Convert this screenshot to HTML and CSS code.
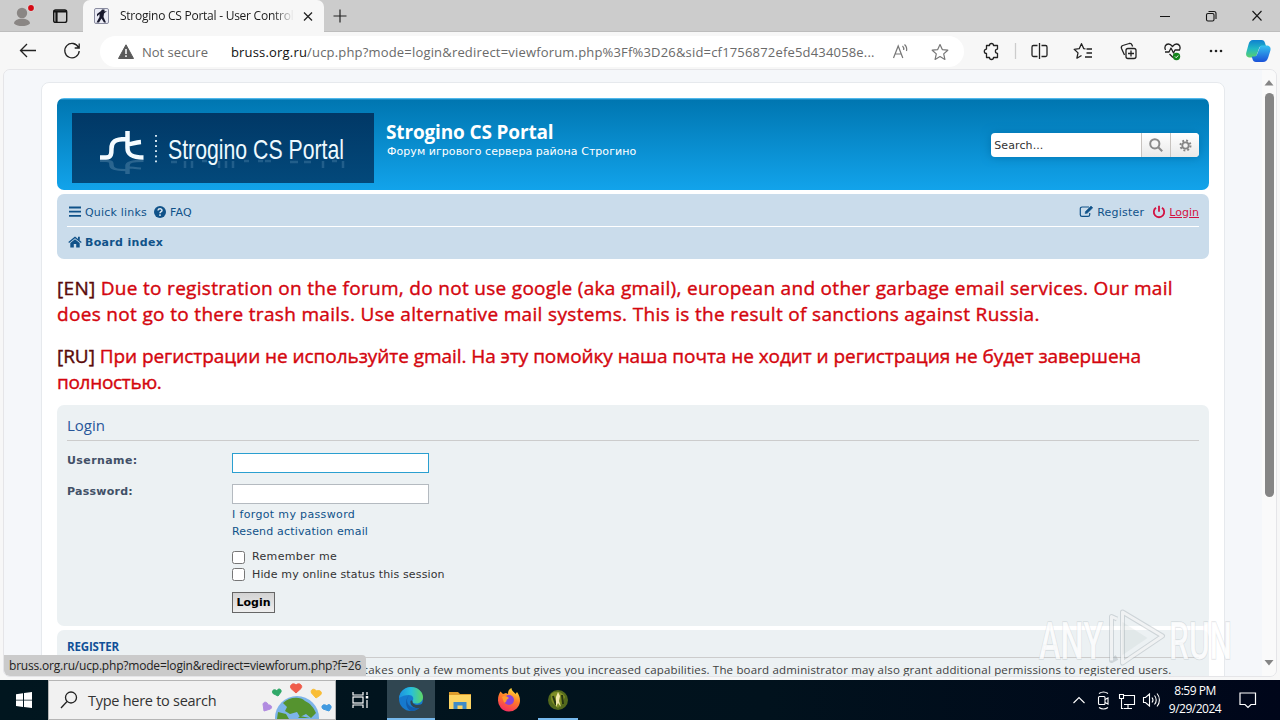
FILE: index.html
```html
<!DOCTYPE html>
<html lang="en">
<head>
<meta charset="utf-8">
<title>Strogino CS Portal - User Control Panel - Login</title>
<link rel="stylesheet" href="styles.css">
</head>
<body>
<div class="screen">
  <header class="tabstrip">
    <svg class="tabstrip-left" width="83" height="32" viewBox="0 0 83 32">
      <circle cx="22" cy="13" r="5.2" fill="#8a8684"/><path d="M14 23.500c0-3 3.500-4.800 8-4.800s8 1.800 8 4.800c-2 2-5 2.600-8 2.600s-6-.6-8-2.600z" fill="#8a8684"/>
      <circle cx="31" cy="8" r="3.600" fill="#e3dcdc"/><circle cx="31" cy="8" r="2.900" fill="#d40a14"/>
      <rect x="53.700" y="10" width="13" height="12.400" rx="2" fill="none" stroke="#151515" stroke-width="1.400"/><path d="M53.500 11.500h13.400M56.500 11v11" stroke="#151515" stroke-width="2.200"/>
    </svg>
    <div class="tab">
      <svg width="16" height="16" viewBox="0 0 16 16"><rect x=".5" y=".5" width="14" height="15" rx="1.500" fill="#e9eaf4" stroke="#8a8ca0"/><path d="M8 1.500h2.500v2L13 3l-3 2.500-.5 3.500 2.500 5.500h-2l-2.500-4-2.500 4H2.500L5.500 9V6L3 8.500V6l4-3z" fill="#17182c"/></svg>
      <span class="tab-title">Strogino CS Portal - User Control</span>
      <svg width="12" height="12" viewBox="0 0 12 12"><path d="M2 2.500l8 8M10 2.500l-8 8" stroke="#222" stroke-width="1.300"/></svg>
    </div>
    <svg class="newtab" width="16" height="16" viewBox="0 0 16 16"><path d="M8 1.500v13M1.500 8h13" stroke="#222" stroke-width="1.200"/></svg>
    <svg class="winctl" width="130" height="32" viewBox="0 0 130 32" fill="none" stroke="#151515" stroke-width="1.100"><path d="M10 16.500h10M102.500 11l9 9.500M111.500 11l-9 9.500"/><rect x="56.500" y="13.500" width="7.500" height="7.500" rx="1.500"/><path d="M58.500 11.500h5.500a2 2 0 0 1 2 2v5.500"/></svg>
  </header>

  <nav class="toolbar">
    <svg class="nav-icons" width="100" height="38" viewBox="0 0 100 38" fill="none" stroke="#222" stroke-width="1.300"><path d="M36 18.500H20.500M27 12l-6.500 6.500L27 25M78.500 15.500A7.200 7.200 0 1 0 79.200 19M79.200 11.500v4.500h-4.500"/></svg>
    <div class="address">
      <svg width="16" height="15" viewBox="0 0 16 15"><path d="M8 .8L15.500 14.500H.5z" fill="#5a5a5a" stroke="#5a5a5a" stroke-linejoin="round"/><path d="M8 5v5M8 11.300v1.700" stroke="#fff" stroke-width="1.500"/></svg>
      <span class="notsecure">Not secure</span><span class="sep"></span>
      <span class="url"><b>bruss.org.ru</b>/ucp.php?mode=login&amp;redirect=viewforum.php%3Ff%3D26&amp;sid=cf1756872efe5d434058e...</span>
      <svg class="address-icons" width="60" height="20" viewBox="0 0 60 20" fill="none" stroke="#777" stroke-width="1.200"><path d="M1.500 16L6.200 4l4.600 12M3 12h6.400M10.500 4c1 1 1.500 2.500 1.200 4M12.500 2.500c2 2 2.500 4.500 2 6.500"/><path d="M48 2.500l2.300 5.100 5.500.6-4.100 3.700 1.200 5.500-4.900-2.800-4.900 2.800 1.200-5.500-4.100-3.700 5.500-.6z" stroke-linejoin="round"/></svg>
    </div>
    <svg class="tool-icons" width="316" height="38" viewBox="964 32 316 38" fill="none" stroke="#222" stroke-width="1.300" stroke-linejoin="round">
      <path d="M986.500 45.500h3a2 2 0 1 1 4 0h4v3.600a2.100 2.100 0 1 0 0 4.200v4.200h-4a2 2 0 1 1-4 0h-3v-4a2.200 2.200 0 1 1 0-4.400z"/>
      <path d="M1015.500 43v16" stroke="#ccc"/>
      <path d="M1037.500 45.500h-4a1.500 1.500 0 0 0-1.500 1.500v8a1.500 1.500 0 0 0 1.500 1.500h4M1041.500 45.500h4a1.500 1.500 0 0 1 1.500 1.500v8a1.500 1.500 0 0 1-1.500 1.500h-4M1039.500 43v16"/>
      <path d="M1085.500 48.800l-1.700-.1-2.300-5-2.300 5-5 .6 3.800 3.600-1.100 5.300 4.600-2.700M1086.500 49h5.500M1086.500 53h5.500M1085 57h7"/>
      <rect x="1126" y="48.500" width="10" height="10" rx="2"/><path d="M1131 50.500v6M1128 53.500h6M1124.500 55l-3-6.500c-.5-1.500 0-2.500 1.300-3l6.400-2c1.500-.4 2.300.2 2.800 1.500l.6 1.500"/>
      <path d="M1173 57.500l-3.500-3.500M1165.500 50c-1.500-3 0-6 3-6 2 0 3 1.200 4 2.500 1-1.300 2-2.500 4-2.500 3 0 4.500 3 3 6M1165 52h4l2-4 2.500 5 1.500-3h5"/><circle cx="1176.500" cy="56.500" r="3.700" fill="#13841b" stroke="none"/><path d="M1175 56.500l1.200 1.200 2-2.200" stroke="#fff" stroke-width="1"/>
      <g fill="#222" stroke="none"><circle cx="1211" cy="51" r="1.300"/><circle cx="1216" cy="51" r="1.300"/><circle cx="1221" cy="51" r="1.300"/></g>
      <defs><linearGradient id="cop1" x1="0" y1="0" x2="0" y2="1"><stop offset="0" stop-color="#0f80d0"/><stop offset=".5" stop-color="#21b8c4"/><stop offset="1" stop-color="#5bd06d"/></linearGradient><linearGradient id="cop2" x1="0" y1="0" x2="0" y2="1"><stop offset="0" stop-color="#35c2f0"/><stop offset="1" stop-color="#1a51d8"/></linearGradient></defs>
      <g stroke="none"><path d="M1253 40h8.500c2 0 3 1 3.500 3l1 3h-4c-2 0-2.500 1-3 2.500l-2.500 7c-.5 1.500-1 2-3 2h-3c-3.500 0-5-2-4.200-5l2.200-8c.8-3 2-4.500 4.500-4.500z" fill="url(#cop1)"/><path d="M1263 62h-7c-2 0-3-1-3.500-3l-.8-2.500h2.500c2 0 2.500-1 3-2.500l2.500-6.500c.5-1.500 1-2 3-2h3.500c3.500 0 5 2 4.200 5l-2.200 7c-1 3-2.700 4.500-5.200 4.500z" fill="url(#cop2)"/></g>
    </svg>
  </nav>

  <main class="viewport">
    <div class="page">
      <div class="wrap">
        <div class="headerbar">
          <svg class="logo" width="302" height="70" viewBox="0 0 302 70">
            <defs><linearGradient id="lg" x1="0" y1="0" x2="0" y2="1"><stop offset="0" stop-color="#013866"/><stop offset="1" stop-color="#03497b"/></linearGradient>
            <g id="mark" fill="none" stroke-width="4.500"><path d="M28 44.500h6c5.500 0 5.500-4 5.500-9 0-7 4-9.500 14-9.500M55.500 18v17c0 7 5 9.500 16 9.500M55 31.500c5 0 7-2 14-2.500"/></g></defs>
            <rect width="302" height="70" fill="url(#lg)"/>
            <use href="#mark" stroke="#f4fbff"/>
            <g opacity=".2" transform="matrix(1 0 0 -.5 0 70)"><use href="#mark" stroke="#cfe6f5"/></g>
            <path d="M84 22v28" stroke="#e4f3fc" stroke-width="1.800" stroke-dasharray="1.800 3.300"/>
            <text class="logo-text" x="96" y="46" textLength="176" lengthAdjust="spacingAndGlyphs" fill="#eefaff">Strogino CS Portal</text>
            <path d="M99 49h6M113 48v7M120 48v7M130 48h5M147 48v7M154 48v7M161 48v7M172 48h5M186 48h5M193 48h6M218 49h8M232 49h7M251 48v7M260 48h5M271 48v7" stroke="#6b9abd" stroke-width="2.500" opacity=".3"/>
          </svg>
          <div class="site">
            <h1>Strogino CS Portal</h1>
            <p>Форум игрового сервера района Строгино</p>
          </div>
          <div class="search">
            <span class="search-field">Search...</span>
            <span class="search-btn"><svg width="14" height="14" viewBox="0 0 14 14" fill="none" stroke="#8a8a8a" stroke-width="2"><circle cx="5.800" cy="5.800" r="4.600"/><path d="M9.200 9.200l4 4"/></svg></span>
            <span class="search-btn"><svg width="13" height="13" viewBox="0 0 13 13" fill="none" stroke="#858585"><circle cx="6.500" cy="6.500" r="3.200" stroke-width="1.800"/><circle cx="6.500" cy="6.500" r="5" stroke-width="2" stroke-dasharray="1.900 2.027"/></svg></span>
          </div>
        </div>

        <div class="navbar">
          <div class="navrow navrow-top">
            <svg width="14" height="12" viewBox="0 0 14 12"><path d="M1 1.500h12M1 5.700h12M1 9.900h12" stroke="#105289" stroke-width="1.800"/></svg>
            <a class="v v-quick">Quick links</a>
            <svg class="faq-icon" width="12" height="12" viewBox="0 0 12 12"><circle cx="6" cy="6" r="6" fill="#105289"/><path d="M4 4.500c.2-2.200 4-2.300 4 0C8 5.800 6 5.700 6 7.300M6 8.300v1.700" stroke="#dce8f1" stroke-width="1.500" fill="none"/></svg>
            <a class="v v-faq">FAQ</a>
            <span class="grow"></span>
            <svg width="15" height="13" viewBox="0 0 15 13" fill="none" stroke="#105289"><path d="M10 2H3a1.700 1.700 0 0 0-1.700 1.700v6A1.700 1.700 0 0 0 3 11.400h6a1.700 1.700 0 0 0 1.700-1.700V8" stroke-width="1.200"/><path d="M6 8.500l.5-2L12 1l1.800 1.800-5.600 5.500z" fill="#105289" stroke-width=".5"/></svg>
            <a class="v v-register">Register</a>
            <svg class="power" width="14" height="14" viewBox="0 0 14 14" fill="none" stroke="#d31141" stroke-width="1.800"><path d="M4 2.800a5.200 5.200 0 1 0 6 0M7 .7v6"/></svg>
            <a class="v login-link">Login</a>
          </div>
          <div class="navrow">
            <svg width="14" height="12" viewBox="0 0 14 12"><path d="M7 .5L13.700 6l-.8.9L7 2.200 1.100 6.900.3 6z M10 .8h1.800v3.500L10 3zM2.300 7L7 3.200 11.700 7v4.500H8.200V8H5.800v3.500H2.300z" fill="#105289"/></svg>
            <a class="v crumb">Board index</a>
          </div>
        </div>

        <div class="rules">
          <p><span class="l1"><b>[EN]</b> Due to registration on the forum, do not use google (aka gmail), european and other garbage email services. Our mail</span><br><span class="l2">does not go to there trash mails. Use alternative mail systems. This is the result of sanctions against Russia.</span></p>
          <p><span class="l3"><b>[RU]</b> При регистрации не используйте gmail. На эту помойку наша почта не ходит и регистрация не будет завершена</span><br><span class="l4">полностью.</span></p>
        </div>

        <section class="panel login">
          <h2>Login</h2>
          <div class="fields">
            <label class="name username">Username:</label><div><span class="input focus"></span></div>
            <label class="name password">Password:</label>
            <div class="stack">
              <span class="input"></span>
              <a class="v forgot">I forgot my password</a>
              <a class="v resend">Resend activation email</a>
              <label class="check first"><i></i><span class="remember">Remember me</span></label>
              <label class="check second"><i></i><span class="hide-status">Hide my online status this session</span></label>
              <span class="button">Login</span>
            </div>
          </div>
        </section>

        <section class="panel register">
          <h3>Register</h3>
          <p>In order to login you must be registered. Registering takes <span class="reg-tail">only a few moments but gives you increased capabilities. The board administrator may also grant additional permissions to registered users.</span></p>
        </section>
      </div>
    </div>
    <div class="scrollbar">
      <svg width="10" height="6" viewBox="0 0 10 6"><path d="M5 0l4.500 5.500h-9z" fill="#858585"/></svg>
      <span class="thumb"></span>
      <svg width="10" height="6" viewBox="0 0 10 6"><path d="M5 5.500L.5 0h9z" fill="#858585"/></svg>
    </div>
    <div class="status"><span>bruss.org.ru/ucp.php?mode=login&amp;redirect=viewforum.php?f=26</span></div>
    <svg class="watermark" width="204" height="66" viewBox="1034 604 204 66">
      <g fill="#fff" fill-opacity=".8" class="wm-text"><text x="1039" y="659" textLength="64" lengthAdjust="spacingAndGlyphs">ANY</text><text x="1169" y="659" textLength="63" lengthAdjust="spacingAndGlyphs">RUN</text></g>
      <g fill="none" stroke-linejoin="round"><path d="M1122.500 612l40 24-40 27zM1117 619l-5.500-2.500v44l5.500-3" stroke="#9fa9af" stroke-opacity=".4" stroke-width="5"/><path d="M1122.500 612l40 24-40 27zM1117 619l-5.500-2.500v44" stroke="#fff" stroke-opacity=".7" stroke-width="3"/><path d="M1122.500 655v-33l25 16z" fill="#a9b2b6" fill-opacity=".15"/></g>
    </svg>
  </main>

  <footer class="taskbar">
    <div class="start"><svg width="16" height="16" viewBox="0 0 16 16"><path d="M0 2.300L7 1.300v6.400H0zM8 1.100L16 0v7.700H8zM0 8.600h7v6.300l-7-1zM8 8.600h8V16l-8-1.100z" fill="#fff"/></svg></div>
    <div class="tasksearch">
      <svg width="18" height="18" viewBox="0 0 18 18" fill="none" stroke="#222" stroke-width="1.300"><circle cx="11" cy="6.500" r="5.500"/><path d="M7 10.500L1 17"/></svg>
      <span>Type here to search</span>
      <svg class="globe" width="72" height="37" viewBox="261 682 72 37">
        <circle cx="297" cy="718" r="22" fill="#7db4ea"/><path d="M283 703c6-6 17-7 22-2 5 2 9 7 11 12l-5 5-5-4-6 3-3-5-7 2-5-3 2-4zM278 712l8 2 3 5h-12zM300 716l10 2h-12z" fill="#55932f"/>
        <path d="M296 693l-5-4.500c-2-3 2-6.500 5-3.500 3-3 7.500.5 5 3.500z" fill="#ef5c4b" stroke="#ef5c4b"/><path d="M278 696l-5-2.500c-2-3.500 2-5 4-2.500.5-3 5-2.500 4 1z" fill="#30a868" stroke="#30a868"/><path d="M316 698l-4.500-5c-1.500-4 3-5 5-2 3-1.500 6.500 1 4 4z" fill="#f9bd35" stroke="#f9bd35"/><path d="M264 711l-1-7c1-3 5-2 5 1 3-.5 5 2 2.500 4z" fill="#b18be0" stroke="#b18be0"/><path d="M329 711l-6-2c-3-3 1-6 4-3 1-3 5-1 4 2z" fill="#429ae0" stroke="#429ae0"/>
      </svg>
    </div>
    <div class="task taskview"><svg width="17" height="16" viewBox="0 0 17 16" fill="none" stroke="#fff" stroke-width="1.200"><path d="M1 0v3h10V0M1 16v-3h10v3M15 0v3M15 8v8"/><rect x="1" y="5" width="10" height="6"/><path d="M15 4v2.500" stroke-width="2.500"/></svg></div>
    <div class="task active"><svg width="26" height="26" viewBox="0 0 26 26"><defs><linearGradient id="edge" x1="0" x2="1"><stop offset="0" stop-color="#1c91df"/><stop offset=".5" stop-color="#27bfdc"/><stop offset="1" stop-color="#5fd763"/></linearGradient></defs><circle cx="13" cy="13" r="12" fill="#1679ce"/><path d="M1 12C2 5 7 1 13 1c7 0 12 5 12 10 0 4-3 6.500-6.500 6.500-3 0-4.500-1-4-2.500 2-3 0-6-3.500-6-4 0-7 1-10 3z" fill="url(#edge)"/><path d="M11 9c-4 5-2 12 6 13 3 .2 5-1 6-2-2 3.500-6 5-10 5-5-2-7-10-2-16z" fill="#135cab"/><path d="M14.500 15c-.5 2 2 4 5 4 2.500 0 4-.8 6-2v3l-3 1.500c-5 2-11-1.500-10-6.500 1-1 2 0 2 0z" fill="#304651"/></svg></div>
    <div class="task"><svg width="22" height="19" viewBox="0 0 22 19"><path d="M0 1h9l2 2h11v4H0z" fill="#dc9c2c"/><path d="M0 4h22v14H0z" fill="#fcd463"/><path d="M4.500 18v-7h13v7h-4v-3.500h-5V18z" fill="#408bc6"/></svg></div>
    <div class="task"><svg width="24" height="24" viewBox="0 0 24 24"><defs><linearGradient id="ff" x1=".7" y1="0" x2=".3" y2="1"><stop offset="0" stop-color="#ffe03a"/><stop offset=".45" stop-color="#ff7d27"/><stop offset="1" stop-color="#f62a63"/></linearGradient></defs><path d="M1 12C1 8 2 6 3.500 3.500L6 6l3-1 2 1c0-3 1-5 3.500-6 0 3 3 4 4 6l1.500-2c2 3 3 5 3 9A11 11 0 0 1 1 12z" fill="url(#ff)"/><circle cx="12" cy="12" r="5" fill="#8a43d8"/><path d="M5 9c2-2 5-1 7 1l-2 1.500c-1 1 0 3-3 3z" fill="#ff9b2c"/></svg></div>
    <div class="task running"><svg width="22" height="22" viewBox="0 0 22 22"><circle cx="11" cy="11" r="10" fill="#53691c"/><path d="M4 5c5-4 12-2 14 3l-4 8-3 3c-4-3-8-6-7-14z" fill="#7f8e25"/><path d="M6 7l3 9M15 6l1 9" stroke="#263411" stroke-width="2"/><path d="M11 3l2 4-1 5 2 6-3-4-2 4V8z" fill="#f3e9ac"/></svg></div>
    <svg class="tray" width="92" height="40" viewBox="1070 680 92 40" fill="none" stroke="#fff" stroke-width="1.100"><path d="M1073.500 703l5.500-5.500 5.500 5.500"/><rect x="1098.500" y="696.500" width="6.500" height="8" rx="1"/><path d="M1105 699.500l3-1.500v6l-3-1.500M1099 693.500c3-2 6-2 9 0M1099 707.500c3 2 6 2 9 0M1124 695.500h10.500v9H1124M1128 704.500v4M1124 708.500h8"/><path d="M1119.500 694.500h4v4h-4zM1121.500 698.500v10h2M1143.500 697.500h2l4-3.500v12l-4-3.500h-2zM1152 697.500c1.200 1.500 1.200 3.500 0 5M1154.500 695.500c2.300 2.500 2.300 6.500 0 9M1157 693.500c3.200 3.500 3.200 9.500 0 13"/></svg>
    <div class="clock"><span class="time">8:59 PM</span><span class="date">9/29/2024</span></div>
    <svg class="notif" width="18" height="17" viewBox="0 0 18 17" fill="none" stroke="#fff" stroke-width="1.200"><path d="M1 1h15.500v11.500H12L9 15.500l-3-3H1z"/></svg>
  </footer>
</div>
</body>
</html>
```
FILE: styles.css
```css
* { box-sizing: border-box; }
body { margin: 0; }
h1, h2, h3, p { margin: 0; }
svg { flex: none; display: block; }

.screen {
  width: 1280px; height: 720px; overflow: hidden;
  display: flex; flex-direction: column;
  background: #f7f7f7;
  font-family: "Open Sans", "Noto Sans", sans-serif;
  white-space: nowrap;
}

/* Browser chrome */
.tabstrip { height: 32px; flex: none; display: flex; background: #ccc; box-shadow: inset 0 -1px #bdbdbd; }
.tab { width: 241px; display: flex; align-items: center; padding: 0 10px 0 11px; background: #f7f7f7; border-radius: 7px 7px 0 0; }
.tab-title {
  width: 174px; margin: 0 8px 0 10px; overflow: hidden;
  font-size: 12px; line-height: 20px; color: #1b1b1b; letter-spacing: -.25px;
  -webkit-mask-image: linear-gradient(90deg, #000 88%, transparent); mask-image: linear-gradient(90deg, #000 88%, transparent);
}
.newtab { margin: 8px 0 0 8px; }
.winctl { margin-left: auto; }

.toolbar { height: 37px; flex: none; display: flex; align-items: flex-start; background: #f7f7f7; }
.address { width: 864px; height: 31px; margin-top: 4px; padding: 0 18px; display: flex; align-items: center; background: #fff; border-radius: 16px; color: #6a6a6a; }
.notsecure { margin-left: 8px; width: 67px; font-size: 13px; }
.sep { width: 1px; height: 16px; margin: 0 13px 0 10px; background: #999; }
.url { width: 644px; font-size: 13px; letter-spacing: .18px; }
.url b { font-weight: 400; color: #111; }
.address-icons { margin-left: 13px; position: relative; left: 4px; }

/* Page viewport */
.viewport {
  position: relative; height: 608px; width: 1274px; margin-left: 3px; flex: none; overflow: hidden;
  display: flex; background: #f4f7fa; border: 1px solid #e5e5e8; border-radius: 7px;
}
.page { width: 1258px; padding: 12px 0 0 37px; background: #f5f7fa; }
.wrap { width: 1184px; height: 640px; padding: 15px; background: #fff; border: 1px solid #e6e9ed; border-radius: 8px; }

.headerbar {
  height: 92px; width: 1152px; padding: 15px 10px 0 15px; margin-bottom: 4px; display: flex;
  background: linear-gradient(#6aceff 0, #0076b1 2px, #12a3eb 92px); border-radius: 7px; color: #fff;
}
.logo-text { font-family: "Liberation Sans", sans-serif; font-size: 28px; }
.site { margin: 7px 0 0 12px; width: 604px; }
.site h1 { font-size: 19px; line-height: 24px; font-weight: 700; letter-spacing: -.15px; }
.site p { font: 11px/15px "DejaVu Sans", sans-serif; margin-left: 1px; letter-spacing: .05px; }
.search { width: 208px; height: 24px; margin: 20px 0 0 2px; display: flex; background: #fff; border-radius: 4px; overflow: hidden; box-shadow: 0 0 10px #0075b0; }
.search-field { width: 150px; padding: 1px 0 0 3px; font: 11px/24px "DejaVu Sans", sans-serif; color: #333; letter-spacing: .1px; }
.search-btn { flex: 1; display: flex; align-items: center; justify-content: center; border-left: 1px solid #c7c3bf; background: linear-gradient(#fff, #e9e9e9); }

.v { font: 11px/17px "DejaVu Sans", sans-serif; color: #105289; }
.navbar { width: 1152px; height: 65px; padding: 3px 10px 0; background: #cadceb; border-radius: 7px; }
.navrow { height: 30px; display: flex; align-items: center; padding-left: 1px; }
.navrow .v { margin: 1px 0 0 3px; }
.navrow-top { border-bottom: 1px solid #fff; }
.navrow .v-quick { letter-spacing: .2px; }
.navrow .faq-icon { margin-left: 7px; }
.navrow .v-faq { margin-left: 4px; letter-spacing: .2px; }
.grow { flex: 1; }
.navrow .v-register { margin-right: 8px; letter-spacing: .22px; }
.navrow .login-link { color: #d31141; text-decoration: underline; }
.navrow .crumb { font-weight: 700; letter-spacing: .33px; }

.rules { height: 146px; padding-top: 16px; font-size: 19px; line-height: 26px; color: #d4060e; -webkit-text-stroke: .4px; }
.rules p { margin-bottom: 16px; }
.rules b { font-weight: 400; color: #5a0a0a; }
.l1 { letter-spacing: .305px; }
.l2 { letter-spacing: .33px; }
.l3 { letter-spacing: -.055px; }
.l4 { letter-spacing: -.3px; }

.panel { width: 1152px; background: #ecf1f3; border-radius: 7px; padding: 10px; color: #3f3f3f; }
.login { height: 221px; margin-bottom: 4px; }
.login h2 { height: 26px; border-bottom: 1px solid #ccc; font-size: 15px; line-height: 21px; font-weight: 400; color: #28579a; }
.fields { display: grid; grid-template-columns: 165px 1fr; grid-template-rows: 31px auto; padding-top: 12px; }
.name { font: 700 11px/15px "DejaVu Sans", sans-serif; color: #425067; }
.username { letter-spacing: .4px; }
.password { letter-spacing: .25px; }
.input { display: block; width: 197px; height: 20px; background: #fff; border: 1px solid #b4bac0; }
.input.focus { border-color: #2a9fd0; }
.stack { display: flex; flex-direction: column; align-items: flex-start; }
.forgot { margin-top: 2px; letter-spacing: .35px; }
.resend { letter-spacing: .17px; }
.check { display: flex; align-items: center; height: 18px; gap: 7px; font: 11px/18px "DejaVu Sans", sans-serif; color: #333; }
.check.first { margin-top: 8px; }
.check i { width: 13px; height: 13px; margin-top: 1px; background: #fff; border: 1px solid #767676; border-radius: 2.500px; }
.check.second i { margin-top: -1px; }
.remember { letter-spacing: .34px; }
.hide-status { letter-spacing: .14px; }
.button { width: 43px; height: 21px; margin-top: 8px; border: 1px solid #666; background: linear-gradient(#d2d2d2, #efefef); color: #000; text-align: center; font: 700 11px/20px "DejaVu Sans", sans-serif; }
.register { height: 90px; }
.register h3 { height: 18px; border-bottom: 1px solid #ccc; font-size: 11.500px; line-height: 14px; text-transform: uppercase; color: #115098; letter-spacing: -.15px; }
.register p { font-size: 11.500px; line-height: 18px; margin-top: 3px; letter-spacing: .28px; }
.reg-tail { letter-spacing: .17px; }

.scrollbar { width: 14px; padding: 10px 2px; display: flex; flex-direction: column; align-items: center; background: #fafafa; }
.thumb { width: 9px; height: 404px; margin: 7px 0 163px; background: #858585; border-radius: 5px; }
.status { position: absolute; left: 0; top: 585px; width: 362px; height: 22px; padding-left: 5px; background: #cbcbcb; border-radius: 0 4px 0 5px; font-size: 12px; line-height: 21px; color: #222; letter-spacing: -.2px; }
.watermark { position: absolute; left: 1030px; top: 534px; }
.wm-text { font: 500 51px Roboto, sans-serif; paint-order: stroke; stroke: #9fa9af; stroke-opacity: .3; stroke-width: 1.500px; }

/* Taskbar */
.taskbar { height: 40px; margin-top: 3px; flex: none; display: flex; background: linear-gradient(90deg, #01161f, #01121d 60%, #00061a); color: #fff; }
.start { width: 48px; display: flex; align-items: center; justify-content: center; }
.tasksearch { width: 288px; padding-left: 11px; display: flex; align-items: center; background: #f1f1f1; border: 1px solid #b5b5b5; color: #333; font-size: 14.500px; letter-spacing: -.27px; }
.tasksearch span { width: 140px; margin-left: 10px; }
.globe { margin-left: 33px; }
.task { width: 49px; display: flex; align-items: center; justify-content: center; }
.taskview { width: 51px; padding-right: 3px; }
.active { width: 48px; background: #304651; border-bottom: 2px solid #76b9ed; }
.running { box-shadow: inset 0 -2px #76b9ed; width: 40px; margin-left: 5px; }
.tray { margin-left: auto; }
.clock { width: 66px; display: flex; flex-direction: column; align-items: center; font-size: 12px; line-height: 18px; padding-top: 2px; letter-spacing: -.5px; }
.notif { margin: 12px 23px 0 11px; }
```
